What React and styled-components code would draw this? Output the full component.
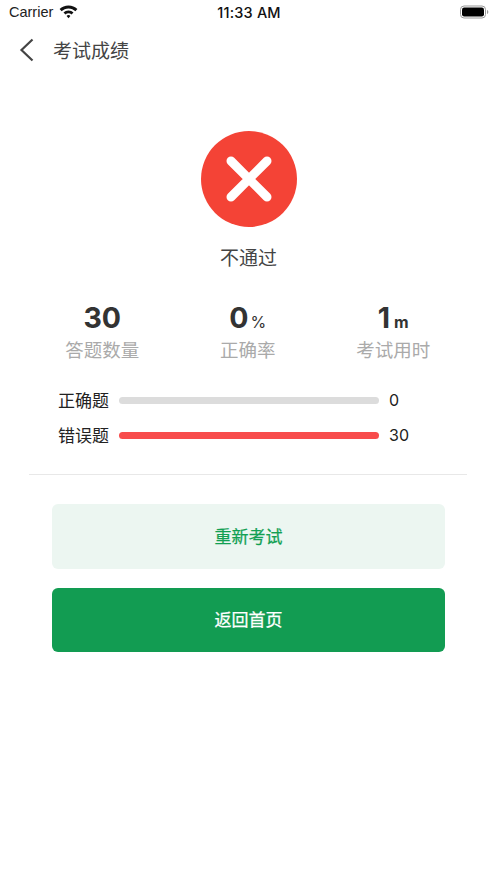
import React from 'react'
import styled, { createGlobalStyle } from 'styled-components'

const GlobalStyle = createGlobalStyle`
  html, body {
    margin: 0;
    padding: 0;
    background: #fff;
    font-family: "Liberation Sans", "Noto Sans CJK SC", sans-serif;
  }
`

const Page = styled.div`
  width: 497px;
  height: 883px;
  overflow: hidden;
  background: #fff;
  display: flex;
  flex-direction: column;
`

const StatusBar = styled.div`
  height: 26px;
  display: grid;
  grid-template-columns: 1fr auto 1fr;
  align-items: center;
  padding: 0 8px 2px 9px;
  color: #111;
  box-sizing: border-box;
`

const Carrier = styled.div`
  display: flex;
  align-items: center;
  gap: 6px;
  font-size: 14.5px;
  color: #222;
`

const Clock = styled.div`
  font-size: 14.5px;
  font-weight: 500;
  font-family: Inter, "Liberation Sans", sans-serif;
  letter-spacing: 0.2px;
`

const BatteryWrap = styled.div`
  justify-self: end;
  display: flex;
`

const NavBar = styled.div`
  height: 47px;
  display: flex;
  align-items: center;
  padding-left: 19px;
  gap: 19px;
`

const NavTitle = styled.div`
  font-size: 19px;
  color: #444;
  font-family: "Noto Sans CJK SC", sans-serif;
`

const Result = styled.div`
  display: flex;
  flex-direction: column;
  align-items: center;
  padding-top: 58px;
`

const ResultLabel = styled.div`
  margin-top: 16px;
  font-size: 19px;
  line-height: 28px;
  color: #444;
  font-family: "Noto Sans CJK SC", sans-serif;
`

const Stats = styled.div`
  display: grid;
  grid-template-columns: repeat(3, 1fr);
  margin: 29px 31px 0 29.5px;
`

const Stat = styled.div`
  display: flex;
  flex-direction: column;
  align-items: center;
`

const StatValue = styled.div`
  display: flex;
  align-items: baseline;
  height: 36px;
  font-family: Inter, "Liberation Sans", sans-serif;
  font-weight: 700;
  font-size: 28.5px;
  line-height: 36px;
  color: #333;
`

const StatUnit = styled.span`
  margin-left: ${props => (props.$light ? 2 : 4)}px;
  font-size: 16px;
  line-height: 1;
  font-weight: ${props => (props.$light ? 400 : 700)};
`

const StatLabel = styled.div`
  font-size: 18.5px;
  line-height: 26px;
  color: #aaa;
  font-family: "Noto Sans CJK SC", sans-serif;
`

const Bars = styled.div`
  margin: 26px 0 0 58px;
  display: flex;
  flex-direction: column;
  gap: 11px;
`

const BarRow = styled.div`
  display: flex;
  align-items: center;
  height: 24px;
`

const BarLabel = styled.div`
  width: 61px;
  padding-bottom: 2px;
  font-size: 17px;
  color: #222;
  font-family: "Noto Sans CJK SC", sans-serif;
`

const BarTrack = styled.div`
  width: 260px;
  height: 7px;
  border-radius: 4px;
  background: ${props => props.$color};
`

const BarValue = styled.div`
  margin-left: 10px;
  font-size: 16px;
  color: #222;
  font-family: Inter, "Liberation Sans", sans-serif;
`

const Divider = styled.div`
  height: 1px;
  margin: 27px 30px 0 29px;
  background: #e8e8e8;
`

const Actions = styled.div`
  display: flex;
  flex-direction: column;
  gap: 19px;
  margin: 29px 52px 0;
`

const ActionButton = styled.button`
  height: 64.5px;
  border: 0;
  border-radius: 6px;
  padding: 0 0 2px;
  font-size: 17px;
  font-weight: 400;
  -webkit-text-stroke: 0.25px currentColor;
  font-family: "Noto Sans CJK SC", sans-serif;
  color: ${props => (props.$primary ? '#fff' : '#12a053')};
  background: ${props => (props.$primary ? '#129c52' : '#ecf6f1')};
`

const WifiIcon = () => (
  <svg width="19" height="14" viewBox="0 0 19 14">
    <path d="M9.5 0.5C6 0.5 2.9 1.9 0.6 4.1l2 2.1C4.4 4.5 6.8 3.4 9.5 3.4s5.1 1.1 6.9 2.8l2-2.1C16.1 1.9 13 0.5 9.5 0.5z" fill="#111" />
    <path d="M9.5 5.4c-2 0-3.7 0.8-5 2l2 2.1c0.8-0.8 1.9-1.2 3-1.2s2.2 0.4 3 1.2l2-2.1c-1.3-1.2-3-2-5-2z" fill="#111" />
    <path d="M9.5 10.1c-0.8 0-1.4 0.3-1.9 0.8l1.9 2.3 1.9-2.3c-0.5-0.5-1.1-0.8-1.9-0.8z" fill="#111" />
  </svg>
)

const BatteryIcon = () => (
  <svg width="29" height="14" viewBox="0 0 29 14">
    <rect x="0.5" y="1" width="25" height="12" rx="3.5" fill="none" stroke="#999" />
    <rect x="2" y="2.5" width="22" height="9" rx="2.2" fill="#000" />
    <path d="M27 5v4c0.8-0.3 1.3-1.1 1.3-2s-0.5-1.7-1.3-2z" fill="#999" />
  </svg>
)

const BackIcon = () => (
  <svg width="15" height="24" viewBox="0 0 15 24">
    <path d="M13.5 1.5L2.5 12l11 10.5" fill="none" stroke="#444" strokeWidth="2.2" />
  </svg>
)

const FailIcon = () => (
  <svg width="96" height="96" viewBox="0 0 96 96">
    <circle cx="48" cy="48" r="48" fill="#f44336" />
    <path d="M30 30l36 36M66 30L30 66" stroke="#fff" strokeWidth="9" strokeLinecap="round" />
  </svg>
)

const stats = [
  { value: '30', label: '答题数量' },
  { value: '0', unit: '%', light: true, label: '正确率' },
  { value: '1', unit: 'm', label: '考试用时' },
]

const bars = [
  { label: '正确题', value: 0, color: '#dcdcdc' },
  { label: '错误题', value: 30, color: '#f84c4c' },
]

export default function App() {
  return (
    <Page>
      <GlobalStyle />
      <StatusBar>
        <Carrier>
          Carrier
          <WifiIcon />
        </Carrier>
        <Clock>11:33 AM</Clock>
        <BatteryWrap>
          <BatteryIcon />
        </BatteryWrap>
      </StatusBar>
      <NavBar>
        <BackIcon />
        <NavTitle>考试成绩</NavTitle>
      </NavBar>
      <Result>
        <FailIcon />
        <ResultLabel>不通过</ResultLabel>
      </Result>
      <Stats>
        {stats.map(stat => (
          <Stat key={stat.label}>
            <StatValue>
              {stat.value}
              {stat.unit && <StatUnit $light={stat.light}>{stat.unit}</StatUnit>}
            </StatValue>
            <StatLabel>{stat.label}</StatLabel>
          </Stat>
        ))}
      </Stats>
      <Bars>
        {bars.map(bar => (
          <BarRow key={bar.label}>
            <BarLabel>{bar.label}</BarLabel>
            <BarTrack $color={bar.color} />
            <BarValue>{bar.value}</BarValue>
          </BarRow>
        ))}
      </Bars>
      <Divider />
      <Actions>
        <ActionButton>重新考试</ActionButton>
        <ActionButton $primary>返回首页</ActionButton>
      </Actions>
    </Page>
  )
}
